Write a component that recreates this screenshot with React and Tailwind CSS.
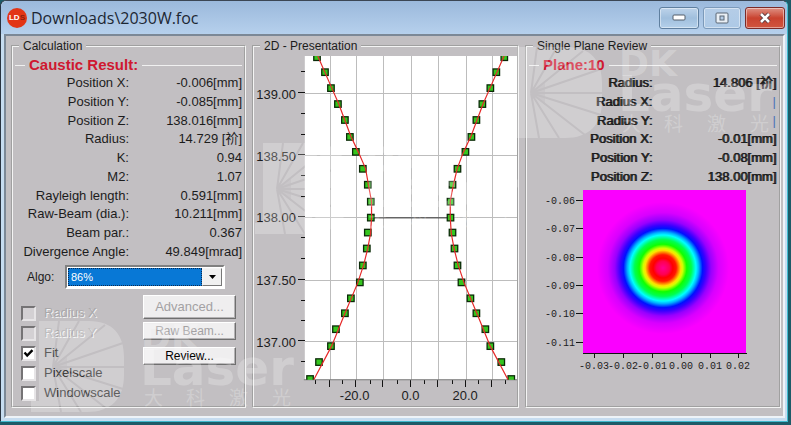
import React from "react";

const causticRows = [
  ["Position X:", "-0.006[mm]"],
  ["Position Y:", "-0.085[mm]"],
  ["Position Z:", "138.016[mm]"],
  ["Radius:", "14.729 [祄]"],
  ["K:", "0.94"],
  ["M2:", "1.07"],
  ["Rayleigh length:", "0.591[mm]"],
  ["Raw-Beam (dia.):", "10.211[mm]"],
  ["Beam par.:", "0.367"],
  ["Divergence Angle:", "49.849[mrad]"],
];

const planeRows = [
  ["Radius:", "14.806 [祄]"],
  ["Radius X:", "|"],
  ["Radius Y:", "|"],
  ["Position X:", "-0.01[mm]"],
  ["Position Y:", "-0.08[mm]"],
  ["Position Z:", "138.00[mm]"],
];

const options = [
  { label: "Radius X", disabled: true },
  { label: "Radius Y", disabled: true },
  { label: "Fit", checked: true },
  { label: "Pixelscale" },
  { label: "Windowscale" },
];

// Each entry: left x, right x, y
const samples = [
  [317, 505, 57], [325, 497, 72], [331, 491, 88], [338, 483, 104], [345, 477, 120],
  [350, 472, 137], [356, 466, 152], [363, 458, 169], [368, 453, 185], [371, 451, 202],
  [371, 451, 218], [368, 453, 233], [367, 455, 249], [363, 458, 266], [360, 462, 283],
  [351, 471, 299], [345, 477, 314], [336, 486, 330], [331, 491, 347], [319, 502, 363],
  [310, 512, 380],
];

const leftCurve =
  "M318 56L332 88L339 104L351 136L359 153L366 169L369 186L372 202L372 218L371 234L368 250L364 266L358 284L345 315L332 347L314 381";
const rightCurve =
  "M505 56L491 88L484 104L472 136L464 153L458 169L454 186L451 202L451 218L452 234L455 250L459 266L465 284L478 315L491 347L509 381";

function Group({ title, children }) {
  return (
    <fieldset className="min-w-0 border-2 border-[#f4f4f4] [border-style:groove]">
      <legend className="ml-1.5 px-1 text-xs leading-4">{title}</legend>
      {children}
    </fieldset>
  );
}

function Heading({ children }) {
  return (
    <div className="mt-0.5 flex h-[18px] items-center gap-1 px-0.5">
      <span className="h-px w-2.5 bg-[#f0f0f0]" />
      <h2 className="text-[15px] leading-[18px] font-bold text-[#cf1830]">{children}</h2>
      <span className="h-px flex-1 bg-[#f0f0f0]" />
    </div>
  );
}

function CausticChart() {
  const yTicks = [[94, "139.00"], [156, "138.50"], [218, "138.00"], [281, "137.50"], [343, "137.00"]];
  const xLines = [331, 357, 384, 412, 439, 467, 493];
  return (
    <svg viewBox="254 54 264 352" className="block w-full" fontFamily='"Liberation Sans", Arial, sans-serif' fontSize="13">
      <defs>
        <clipPath id="plot"><rect x="305" y="56" width="213" height="325" /></clipPath>
      </defs>
      <rect x="305" y="56" width="213" height="325" fill="#fff" />
      <g stroke="#bdbdbd" shapeRendering="crispEdges">
        {xLines.map((x) => <line key={x} x1={x} x2={x} y1="56" y2="381" />)}
        {yTicks.map(([y]) => <line key={y} x1="305" x2="518" y1={y} y2={y} />)}
      </g>
      <g stroke="#111" shapeRendering="crispEdges">
        {yTicks.map(([y]) => <line key={y} x1="298" x2="305" y1={y - 1} y2={y - 1} />)}
        {[72, 114, 135, 176, 197, 238, 259, 301, 322, 363].map((y) => (
          <line key={y} x1="301" x2="305" y1={y} y2={y} />
        ))}
        {xLines.map((x) => <line key={x} x1={x - 1} x2={x - 1} y1="381" y2="388" />)}
        {[316, 343, 371, 398, 425, 453, 479, 506].map((x) => (
          <line key={x} x1={x} x2={x} y1="381" y2="385" />
        ))}
      </g>
      <line x1="304" x2="518" y1="381" y2="381" stroke="#777" />
      <line x1="372" x2="451" y1="218.5" y2="218.5" stroke="#333" />
      <g clipPath="url(#plot)">
        {samples.map(([l, r, y]) => (
          <g key={y} fill="#35c51e" stroke="#0b2a08" strokeWidth="1.3">
            <rect x={l - 3} y={y - 3} width="6.5" height="6.5" />
            <rect x={r - 3} y={y - 3} width="6.5" height="6.5" />
          </g>
        ))}
        <path d={leftCurve} fill="none" stroke="#e62a2a" strokeWidth="1.2" />
        <path d={rightCurve} fill="none" stroke="#e62a2a" strokeWidth="1.2" />
      </g>
      <g textAnchor="end" fill="#1c1c1c">
        {yTicks.map(([y, t]) => <text key={t} x="296" y={y + 5}>{t}</text>)}
      </g>
      <g textAnchor="middle" fill="#1c1c1c">
        <text x="355" y="401">-20.0</text>
        <text x="411" y="401">0.0</text>
        <text x="466" y="401">20.0</text>
      </g>
    </svg>
  );
}

function BeamProfile() {
  const ys = [[201, "-0.06"], [229, "-0.07"], [258, "-0.08"], [286, "-0.09"], [314, "-0.10"], [343, "-0.11"]];
  const xs = [[595, "-0.03"], [624, "-0.02"], [653, "-0.01"], [682, "0.00"], [711, "0.01"], [739, "0.02"]];
  return (
    <svg viewBox="528 187 252 200" className="block w-full" fontFamily='"Liberation Mono", "Courier New", monospace' fontSize="10">
      <defs>
        <radialGradient id="beam" gradientUnits="userSpaceOnUse" cx="664" cy="269" r="66">
          <stop offset="0" stopColor="#ff0090" />
          <stop offset="0.1" stopColor="#ff0050" />
          <stop offset="0.15" stopColor="#ff0000" />
          <stop offset="0.2" stopColor="#ff1800" />
          <stop offset="0.27" stopColor="#ffe000" />
          <stop offset="0.3" stopColor="#d0ff00" />
          <stop offset="0.36" stopColor="#10ff00" />
          <stop offset="0.43" stopColor="#00ff50" />
          <stop offset="0.5" stopColor="#00ffff" />
          <stop offset="0.54" stopColor="#00b0ff" />
          <stop offset="0.6" stopColor="#0010ff" />
          <stop offset="0.65" stopColor="#3800ff" />
          <stop offset="0.73" stopColor="#9800ff" />
          <stop offset="0.84" stopColor="#d800ff" />
          <stop offset="1" stopColor="#fa00ff" />
        </radialGradient>
      </defs>
      <rect x="584" y="191" width="163" height="163" fill="url(#beam)" />
      <g stroke="#111" shapeRendering="crispEdges">
        <line x1="584" x2="748" y1="354" y2="354" />
        {ys.map(([y]) => <line key={y} x1="577" x2="584" y1={y} y2={y} />)}
        {xs.map(([x]) => <line key={x} x1={x} x2={x} y1="354" y2="359" />)}
      </g>
      <g fill="#1c1c1c">
        {ys.map(([y, t]) => <text key={t} x="576" y={y + 4} textAnchor="end">{t}</text>)}
        {xs.map(([x, t]) => <text key={t} x={x} y="370" textAnchor="middle">{t}</text>)}
      </g>
    </svg>
  );
}

function Watermark({ x, y }) {
  return (
    <g transform={`translate(${x} ${y})`}>
      <path
        mask="url(#rays)"
        d="M8 0H58C82 0 93 14 93 36V54C93 78 80 91 56 91H0V80H8Z"
      />
      <text x="110" y="29" fontSize="36">DK</text>
      <text x="109" y="64" fontSize="50">Laser</text>
      <g fontFamily='"Noto Sans CJK SC", sans-serif' fontSize="19" fontWeight="400">
        <text x="113" y="84">大</text>
        <text x="155" y="84">科</text>
        <text x="198" y="84">激</text>
        <text x="241" y="84">光</text>
      </g>
    </g>
  );
}

function WatermarkLayer() {
  return (
    <svg
      aria-hidden="true"
      className="pointer-events-none absolute inset-0 h-full w-full"
      fill="#fff"
      fillOpacity="0.24"
      fontFamily='"DejaVu Sans", sans-serif'
      fontWeight="700"
    >
      <defs>
        <mask id="rays" maskUnits="userSpaceOnUse" x="0" y="0" width="95" height="95">
          <rect width="95" height="95" fill="#fff" fillOpacity="1" />
          <path
            d="M22 46L28 0M22 46L48 0M22 46L74 4M22 46L92 22M22 46L95 46M22 46L92 68M22 46L76 88M22 46L50 91M22 46L30 91"
            stroke="#000"
            strokeWidth="2"
          />
          <path d="M22 46L36 34V58Z" fill="#000" fillOpacity="0.5" />
        </mask>
      </defs>
      <Watermark x={30} y={320} />
      <Watermark x={254} y={142} />
      <Watermark x={508} y={46} />
    </svg>
  );
}

const captionButton =
  "flex h-[22px] items-center justify-center rounded-[3px] border shadow-[inset_0_0_0_1px_rgba(255,255,255,0.45)]";

const pushButton =
  "w-full border border-t-white border-l-white border-r-[#6f6f6f] border-b-[#6f6f6f] bg-[#efeeef] text-center shadow-[inset_-1px_-1px_0_#b4b2b4] disabled:text-[#a3a1a3]";

export default function App() {
  return (
    <div className="flex min-h-screen flex-col bg-[#1d5b68] pr-[3px] pb-[3px] font-['Liberation_Sans','Noto_Sans_CJK_SC',Arial,sans-serif] text-[13px] text-[#1c1c1c]">
      <main className="relative flex flex-1 flex-col rounded-t-md border border-t-[#3b4654] border-r-[#3fb9cd] border-b-[#3fb9cd] border-l-[#28323f] bg-[#c6dcf0] pr-0.5 pb-[3px] pl-[3px]">
        <header className="-mr-0.5 -ml-[3px] flex h-[33px] items-center rounded-t-md bg-linear-to-b from-[#9bb9dc] to-[#b6d0ec] pr-0.5 pl-1.5">
          <span className="flex h-5 w-5 items-center justify-center rounded-full bg-[#e23516] text-[8px] font-bold text-white">
            LD<span className="text-[#8c1e10]">S</span>
          </span>
          <h1 className="ml-1 flex-1 font-['Open_Sans',sans-serif] text-base leading-6 text-[#1d2733]">
            Downloads\2030W.foc
          </h1>
          <div className="flex gap-1">
            <button aria-label="Minimize" className={`${captionButton} w-10 border-[#5f7f9f] bg-linear-to-b from-[#bdd3ea] via-[#a0bfdd] to-[#b4d0ea]`}>
              <svg width="14" height="7" viewBox="0 0 14 7"><rect x="1" y="1" width="12" height="5" rx="1" fill="#fff" stroke="#555f6b" /></svg>
            </button>
            <button aria-label="Maximize" className={`${captionButton} w-[38px] border-[#7c9aba] bg-linear-to-b from-[#b5cde7] to-[#adc9e6]`}>
              <svg width="14" height="12" viewBox="0 0 14 12">
                <rect x="1" y="1" width="12" height="10" rx="1" fill="#e9eff5" stroke="#5b6774" />
                <rect x="5" y="4" width="4" height="4" fill="#b5cde7" stroke="#5b6774" />
              </svg>
            </button>
            <button aria-label="Close" className={`${captionButton} w-10 border-[#7b2a28] bg-linear-to-b from-[#dd8f83] via-[#c9422f] to-[#d0553f]`}>
              <svg width="14" height="12" viewBox="0 0 14 12">
                <path d="M3 2L11 10M11 2L3 10" stroke="#5a3b40" strokeWidth="4.4" />
                <path d="M3 2L11 10M11 2L3 10" stroke="#fff" strokeWidth="2.6" />
              </svg>
            </button>
          </div>
        </header>

        <div className="grid flex-1 grid-cols-[235fr_267fr_256fr] gap-1.5 border-2 border-t-[#7c8896] border-r-[#eef3f8] border-b-[#eef3f8] border-l-[#7c8896] bg-[#c2bfc2] pt-0.5 pr-0.5 pb-2 pl-[5px]">
          <Group title="Calculation">
            <Heading>Caustic Result:</Heading>
            <dl className="grid h-[187px] grid-rows-10 pr-0.5 pl-2">
              {causticRows.map(([name, value]) => (
                <div key={name} className="flex items-center leading-4 whitespace-nowrap">
                  <dt className="w-[108px] text-right">{name}</dt>
                  <dd className="flex-1 text-right">{value}</dd>
                </div>
              ))}
            </dl>

            <div className="mt-1 flex items-center pl-3.5">
              <label htmlFor="algo" className="w-[38px] text-xs">Algo:</label>
              <div className="flex h-6 w-40 border-2 border-t-[#808080] border-r-white border-b-white border-l-[#808080] bg-white p-px">
                <select
                  id="algo"
                  defaultValue="86%"
                  className="min-w-0 flex-1 appearance-none border border-dotted border-[#0a2a50] bg-[#0878d6] pl-0.5 text-[11px] leading-4 text-white outline-none"
                >
                  <option>86%</option>
                </select>
                <span className="flex w-5 items-center justify-center border border-t-[#f4f4f4] border-r-[#777] border-b-[#777] border-l-[#f4f4f4] bg-[#f0f0f0]">
                  <svg width="7" height="4" viewBox="0 0 7 4"><path d="M0 0H7L3.5 4Z" /></svg>
                </span>
              </div>
            </div>

            <div className="mt-1.5 flex items-start justify-between pr-2 pl-2">
              <div className="pt-2">
                {options.map((o) => (
                  <label key={o.label} className="flex h-5 items-center gap-2">
                    <span className="relative flex">
                      <input
                        type="checkbox"
                        defaultChecked={o.checked}
                        disabled={o.disabled}
                        className="peer h-[15px] w-[15px] appearance-none border-2 border-t-[#757375] border-r-[#e6e4e6] border-b-[#e6e4e6] border-l-[#757375] bg-white disabled:bg-[#d3d0d3]"
                      />
                      <svg viewBox="0 0 15 15" className="pointer-events-none absolute inset-0 hidden peer-checked:block">
                        <path d="M3.5 6.5L6.2 9.5L11.5 4.2" fill="none" stroke="#000" strokeWidth="2.4" />
                      </svg>
                    </span>
                    <span className={o.disabled ? "text-[#aaa8aa] [text-shadow:1px_1px_0_#f4f4f4]" : "text-[#2c2c2c]"}>
                      {o.label}
                    </span>
                  </label>
                ))}
              </div>
              <div className="w-[93px]">
                <button disabled className={`${pushButton} h-6 text-[13px] leading-5`}>Advanced...</button>
                <button disabled className={`${pushButton} mt-[3px] h-[18px] text-xs leading-4`}>Raw Beam...</button>
                <button className={`${pushButton} mt-1.5 h-[18px] text-xs leading-4 text-black`}>Review...</button>
              </div>
            </div>
          </Group>

          <Group title="2D - Presentation">
            <CausticChart />
          </Group>

          <Group title="Single Plane Review">
            <Heading>Plane:10</Heading>
            <dl className="grid h-28 grid-rows-6 pr-[3px] pl-2">
              {planeRows.map(([name, value]) => (
                <div key={name} className="flex items-center leading-4 whitespace-nowrap [text-shadow:1px_0_0_#1c1c1c]">
                  <dt className="w-[117px] text-right">{name}</dt>
                  <dd className={value === "|" ? "flex-1 text-right text-[#4a72b8] [text-shadow:none]" : "flex-1 text-right"}>
                    {value}
                  </dd>
                </div>
              ))}
            </dl>
            <BeamProfile />
          </Group>
        </div>
        <WatermarkLayer />
      </main>
    </div>
  );
}
